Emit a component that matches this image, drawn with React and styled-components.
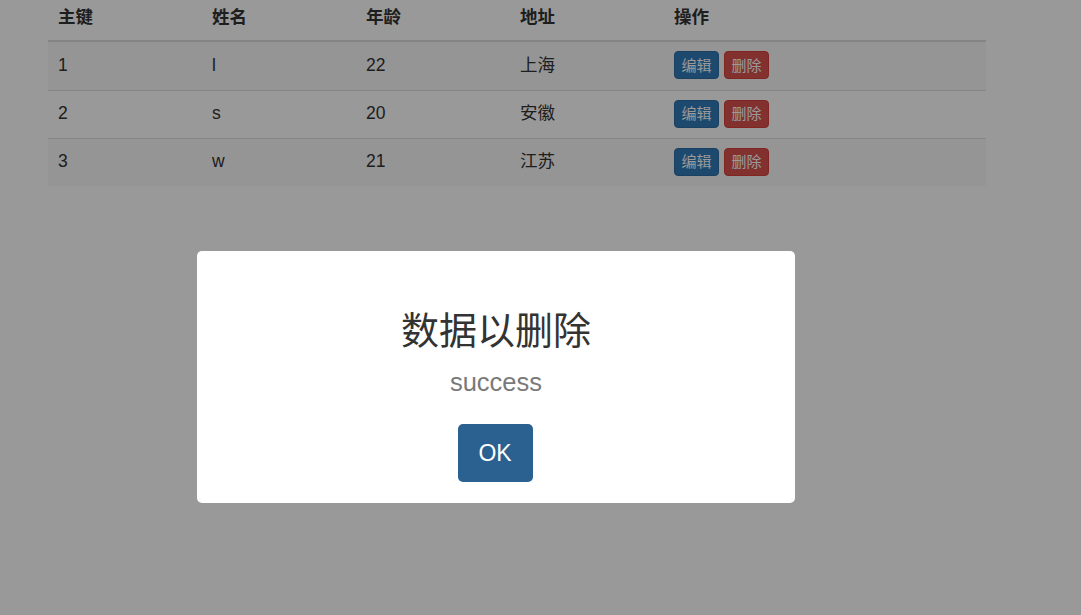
import React from "react";
import styled, { createGlobalStyle } from "styled-components";

const rows = [
  { id: 1, name: "l", age: 22, addr: "上海" },
  { id: 2, name: "s", age: 20, addr: "安徽" },
  { id: 3, name: "w", age: 21, addr: "江苏" },
];

const cols = [154, 154, 154, 154, 322];

const App = () => {
  return (
    <Page>
      <GlobalStyle />
      <Table>
        <HeadRow>
          {["主键", "姓名", "年龄", "地址", "操作"].map((h, i) => (
            <HeadCell key={h} $w={cols[i]}>
              {h}
            </HeadCell>
          ))}
        </HeadRow>
        {rows.map((r, i) => (
          <Row key={r.id} $striped={i % 2 === 0} $first={i === 0}>
            <Cell $w={cols[0]}>{r.id}</Cell>
            <Cell $w={cols[1]}>{r.name}</Cell>
            <Cell $w={cols[2]}>{r.age}</Cell>
            <Cell $w={cols[3]}>{r.addr}</Cell>
            <Cell $w={cols[4]}>
              <SmallButton $kind="primary">编辑</SmallButton>
              <SmallButton $kind="danger">删除</SmallButton>
            </Cell>
          </Row>
        ))}
      </Table>

      {/* 遮罩 + 弹窗 */}
      <Overlay />
      <Alert>
        <AlertTitle>数据以删除</AlertTitle>
        <AlertText>success</AlertText>
        <ConfirmButton>OK</ConfirmButton>
      </Alert>
    </Page>
  );
};

const GlobalStyle = createGlobalStyle`
  html, body {
    margin: 0;
    padding: 0;
    background: #fff;
  }
  body {
    font-family: "Liberation Sans", Arial, "Noto Sans CJK SC", sans-serif;
    color: #333;
  }
`;

const Page = styled.div`
  width: 1081px;
  height: 615px;
  overflow: hidden;
`;

const Table = styled.div`
  width: 938px;
  margin-left: 48px;
  font-size: 17.5px;
  line-height: 25px;
`;

const HeadRow = styled.div`
  display: flex;
  border-bottom: 2px solid #ddd;
`;

const HeadCell = styled.div`
  width: ${(p) => p.$w}px;
  box-sizing: border-box;
  padding: 5px 10px 10px;
  font-weight: bold;
`;

const Row = styled.div`
  display: flex;
  height: 48px;
  box-sizing: border-box;
  border-top: ${(p) => (p.$first ? "none" : "1px solid #ddd")};
  background: ${(p) => (p.$striped ? "#f9f9f9" : "#fff")};
`;

const Cell = styled.div`
  width: ${(p) => p.$w}px;
  box-sizing: border-box;
  padding: 0 10px 2px;
  display: flex;
  align-items: center;
  gap: 5px;
`;

const SmallButton = styled.span`
  display: inline-flex;
  align-items: center;
  justify-content: center;
  width: 45px;
  height: 28px;
  box-sizing: border-box;
  font-size: 15px;
  color: #fff;
  border-radius: 4px;
  border: 1px solid ${(p) => (p.$kind === "primary" ? "#2e6da4" : "#d43f3a")};
  background: ${(p) => (p.$kind === "primary" ? "#337ab7" : "#d9534f")};
`;

const Overlay = styled.div`
  position: fixed;
  inset: 0;
  background: rgba(0, 0, 0, 0.4);
`;

const Alert = styled.div`
  position: fixed;
  left: 197px;
  top: 251px;
  width: 598px;
  height: 252px;
  box-sizing: border-box;
  background: #fff;
  border-radius: 5px;
  padding-top: 58px;
  display: flex;
  flex-direction: column;
  align-items: center;
`;

const AlertTitle = styled.h2`
  margin: 0;
  font-size: 38px;
  line-height: 45px;
  font-weight: normal;
  color: #333;
`;

const AlertText = styled.p`
  margin: 13px 0 0;
  font-size: 25.5px;
  line-height: 30px;
  color: #797979;
`;

const ConfirmButton = styled.button`
  margin-top: 27px;
  width: 75px;
  height: 58px;
  border: none;
  border-radius: 5px;
  background: #2a6190;
  color: #fff;
  font-family: "Liberation Sans", Arial, sans-serif;
  font-size: 23px;
  padding: 0;
  align-self: center;
  transform: translateX(-1px);
`;

export default App;
